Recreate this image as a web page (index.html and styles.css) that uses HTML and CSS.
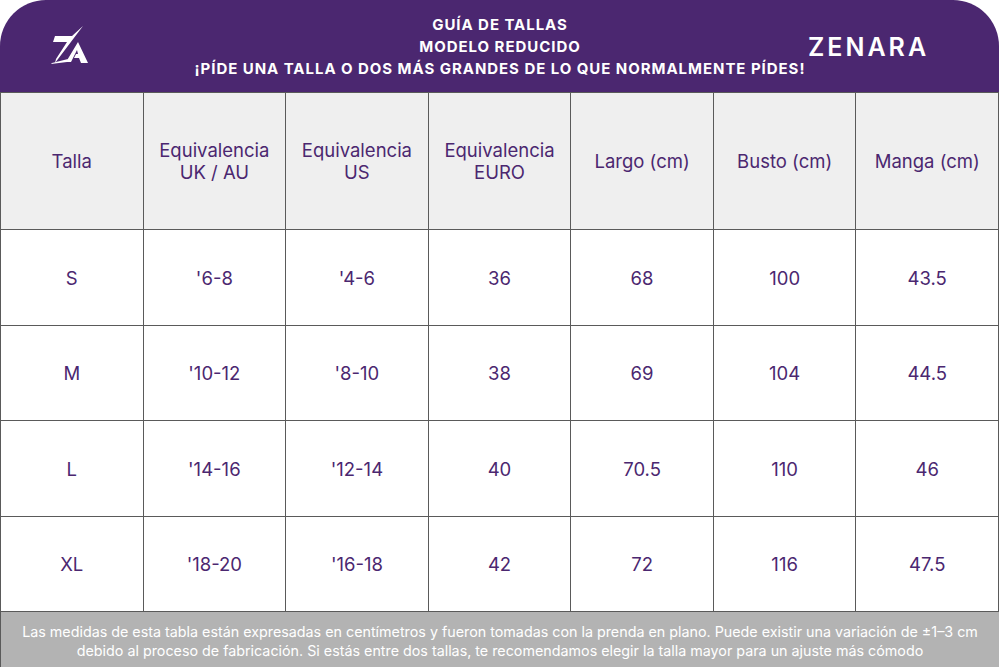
FILE: index.html
```html
<!DOCTYPE html>
<html lang="es">
<head>
<meta charset="utf-8">
<title>Guía de tallas</title>
<link rel="stylesheet" href="styles.css">
</head>
<body>
<div class="page">
  <header class="top">
    <div class="logo">
      <svg width="40" height="42" viewBox="0 0 40 42">
        <polygon fill="#fff" points="5,10 22,10 33,0 5,37 6,33 17,16 3,16"/>
        <polygon fill="#fff" points="2,37 18,33 17,36 1,38"/>
        <polygon fill="#fff" points="28,16 38,37 31,37 29,32 24,32 26,28 28,28 27,24 21,36 16,36"/>
      </svg>
    </div>
    <div class="title">
      <div>GUÍA DE TALLAS</div>
      <div>MODELO REDUCIDO</div>
      <div>¡PÍDE UNA TALLA O DOS MÁS GRANDES DE LO QUE NORMALMENTE PÍDES!</div>
    </div>
    <div class="brand">ZENARA</div>
  </header>
  <div class="grid">
    <div class="cell head">Talla</div>
    <div class="cell head">Equivalencia<br>UK / AU</div>
    <div class="cell head">Equivalencia<br>US</div>
    <div class="cell head">Equivalencia<br>EURO</div>
    <div class="cell head">Largo (cm)</div>
    <div class="cell head">Busto (cm)</div>
    <div class="cell head">Manga (cm)</div>

    <div class="cell">S</div><div class="cell">'6-8</div><div class="cell">'4-6</div><div class="cell">36</div><div class="cell">68</div><div class="cell">100</div><div class="cell">43.5</div>
    <div class="cell">M</div><div class="cell">'10-12</div><div class="cell">'8-10</div><div class="cell">38</div><div class="cell">69</div><div class="cell">104</div><div class="cell">44.5</div>
    <div class="cell">L</div><div class="cell">'14-16</div><div class="cell">'12-14</div><div class="cell">40</div><div class="cell">70.5</div><div class="cell">110</div><div class="cell">46</div>
    <div class="cell">XL</div><div class="cell">'18-20</div><div class="cell">'16-18</div><div class="cell">42</div><div class="cell">72</div><div class="cell">116</div><div class="cell">47.5</div>
  </div>
  <footer class="note">Las medidas de esta tabla están expresadas en centímetros y fueron tomadas con la prenda en plano. Puede existir una variación de ±1–3 cm<br>debido al proceso de fabricación. Si estás entre dos tallas, te recomendamos elegir la talla mayor para un ajuste más cómodo</footer>
</div>
</body>
</html>
```

FILE: styles.css
```css
html, body {
  margin: 0;
  padding: 0;
  background: #ffffff;
}
body {
  font-family: Inter, "Open Sans", "Liberation Sans", sans-serif;
  width: 1000px;
  height: 667px;
  overflow: hidden;
}
.page {
  width: 999px;
  display: flex;
  flex-direction: column;
}
.top {
  height: 92px;
  background: #4b2770;
  border-radius: 46px 46px 0 0;
  display: grid;
  grid-template-columns: 140px 720px 1fr;
  align-items: center;
  color: #ffffff;
}
.logo {
  display: flex;
  justify-content: center;
  padding-top: 2px;
}
.title {
  text-align: center;
  font-weight: 700;
  font-size: 15px;
  line-height: 22px;
  letter-spacing: 0.95px;
  padding-top: 2px;
}
.brand {
  font-weight: 600;
  font-size: 25px;
  letter-spacing: 3px;
  text-align: left;
  margin-left: -52px;
  padding-top: 2px;
}
.grid {
  display: grid;
  grid-template-columns: repeat(7, 1fr);
  grid-template-rows: 137px 96px 95px 96px 95px;
  border-left: 1px solid #5a5a5a;
  border-top: 1px solid #5a5a5a;
}
.cell {
  border-right: 1px solid #5a5a5a;
  border-bottom: 1px solid #5a5a5a;
  display: flex;
  align-items: center;
  justify-content: center;
  text-align: center;
  color: #4b2770;
  font-size: 18.5px;
  line-height: 22px;
}
.head {
  background: #efefef;
}
.note {
  background: #b3b3b3;
  color: #ffffff;
  font-size: 14.3px;
  line-height: 19px;
  text-align: center;
  height: 55px;
  padding-top: 10px;
  box-sizing: border-box;
  border-left: 1px solid #5a5a5a;
}
```
